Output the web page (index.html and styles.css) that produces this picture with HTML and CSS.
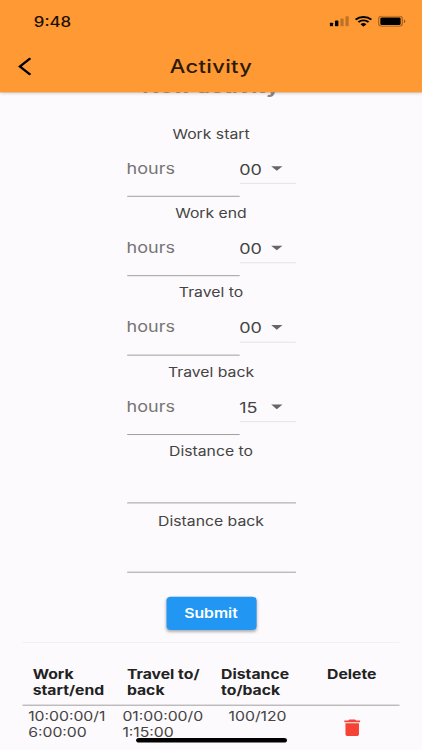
FILE: index.html
```html
<!DOCTYPE html>
<html>

	<head>
		<meta charset="utf-8" />
		<meta name="viewport" content="width=device-width, initial-scale=1">
		<title>Activity</title>
		<link rel="stylesheet" href="styles.css">
	</head>

	<body>
		<div class="screen">
			<header class="header">
				<div class="status">
					<span class="time">9:48</span>
					<div class="status-icons">
						<svg width="17" height="12" viewBox="0 0 17 12">
							<rect x="0" y="7.5" width="3" height="4" rx=".7" />
							<rect x="4.7" y="5.3" width="3" height="6.2" rx=".7" />
							<rect x="9.4" y="3" width="3" height="8.5" rx=".7" opacity=".25" />
							<rect x="14" y="0.5" width="3" height="11" rx=".7" opacity=".25" />
						</svg>
						<svg width="16" height="12" viewBox="0 0 16 12">
							<path d="M1 4.3a10 10 0 0 1 14 0M3.5 6.9a6.4 6.4 0 0 1 9 0" fill="none" stroke="#000" stroke-width="2" />
							<path d="M8 12L5.4 9.3a3.7 3.7 0 0 1 5.2 0z" />
						</svg>
						<svg width="25" height="12" viewBox="0 0 25 12">
							<rect x=".5" y=".5" width="21" height="11" rx="2.8" fill="none" stroke="#000" opacity=".4" />
							<rect x="2" y="2" width="18" height="8" rx="1.4" />
							<path d="M23 4v4c1.6-.6 1.6-3.4 0-4z" opacity=".45" />
						</svg>
					</div>
				</div>
				<div class="nav">
					<svg class="back" width="12" height="20" viewBox="0 0 12 20">
						<path d="M11 1L1.7 10L11 19" fill="none" stroke="#000" stroke-width="2.3" />
					</svg>
					<h1 class="title">Activity</h1>
				</div>
			</header>

			<main class="content">
				<h2 class="form-tit">New activity</h2>
				<form class="form">
					<div class="item">
						<label>Work start</label>
						<div class="row">
							<div class="hours">hours</div>
							<div class="select">00<i class="arrow"></i></div>
						</div>
					</div>
					<div class="item">
						<label>Work end</label>
						<div class="row">
							<div class="hours">hours</div>
							<div class="select">00<i class="arrow"></i></div>
						</div>
					</div>
					<div class="item">
						<label>Travel to</label>
						<div class="row">
							<div class="hours">hours</div>
							<div class="select">00<i class="arrow"></i></div>
						</div>
					</div>
					<div class="item">
						<label>Travel back</label>
						<div class="row">
							<div class="hours">hours</div>
							<div class="select">15<i class="arrow"></i></div>
						</div>
					</div>
					<div class="item item-short">
						<label>Distance to</label>
						<div class="distance"></div>
					</div>
					<div class="item item-short">
						<label>Distance back</label>
						<div class="distance"></div>
					</div>
					<button class="submit" type="button">Submit</button>
				</form>

				<section class="table">
					<div class="table-head">
						<div>Work<br>start/end</div>
						<div>Travel to/<br>back</div>
						<div>Distance<br>to/back</div>
						<div class="center">Delete</div>
					</div>
					<div class="table-row">
						<div>10:00:00/1<br>6:00:00</div>
						<div>01:00:00/0<br>1:15:00</div>
						<div class="center">100/120</div>
						<div class="delete">
							<svg width="24" height="24" viewBox="0 0 24 24">
								<path d="M6 19c0 1.1.9 2 2 2h8c1.1 0 2-.9 2-2V7H6v12zM19 4h-3.5l-1-1h-5l-1 1H5v2h14V4z" fill="#f44336" />
							</svg>
						</div>
					</div>
				</section>
			</main>
			<div class="home-bar"></div>
		</div>
	</body>

</html>
```

FILE: styles.css
```css
* {
	padding: 0;
	margin: 0;
	box-sizing: border-box;
}

html {
	height: 100%;
	overflow: hidden;
}

body {
	width: 422px;
	height: 750px;
	overflow: clip;
	background: #fcfafc;
	font-family: Inter, "Liberation Sans", sans-serif;
	color: #444;
}

.screen {
	position: relative;
	width: 375px;
	height: 812px;
	overflow: clip;
	transform: scale(1.1253, .9236);
	transform-origin: 0 0;
}

.header {
	position: relative;
	z-index: 2;
	height: 100px;
	background: #ff9933;
	box-shadow: 0 1px 4px rgba(0, 0, 0, .35);
}

.status {
	display: flex;
	justify-content: space-between;
	height: 44px;
	padding: 14px 14.5px 0 30px;
}

.time {
	padding-top: 1px;
	font-size: 15px;
	font-weight: 500;
	line-height: 18px;
	color: #1c0f02;
}

.status-icons {
	display: flex;
	gap: 5px;
	padding-top: 3px;
}

.nav {
	display: grid;
	grid-template-columns: 56px 1fr 56px;
	align-items: center;
	height: 56px;
}

.back {
	margin-left: 16px;
}

.title {
	font-size: 19.5px;
	font-weight: 450;
	letter-spacing: .3px;
	text-align: center;
	color: #2b1a08;
}

.form-tit {
	height: 35px;
	margin-top: -18px;
	font-size: 20px;
	font-weight: 700;
	line-height: 24px;
	text-align: center;
	color: #88868a;
}

.form {
	display: flex;
	flex-direction: column;
	align-items: center;
	padding-top: 18.5px;
}

.item {
	width: 150px;
	height: 86px;
}

.item-short {
	height: 75px;
}

.item label {
	display: block;
	height: 17px;
	font-size: 14px;
	line-height: 17px;
	text-align: center;
	white-space: nowrap;
}

.row {
	display: flex;
}

.hours {
	width: 100px;
	height: 60px;
	padding-top: 19.5px;
	font-size: 16px;
	line-height: 20px;
	color: #757475;
	border-bottom: 1px solid #999;
}

.select {
	display: flex;
	justify-content: space-between;
	align-items: center;
	width: 50px;
	height: 46px;
	padding: 15px 12px 0 0;
	font-size: 16px;
	border-bottom: 1px solid #e4e2e4;
}

.arrow {
	border: 5px solid transparent;
	border-top-color: #666;
	border-bottom: 0;
}

.distance {
	height: 48.5px;
	border-bottom: 1px solid #999;
}

.submit {
	width: 80px;
	height: 36px;
	margin-top: 16px;
	padding-bottom: 1px;
	border: 0;
	border-radius: 4px;
	background: #2196f3;
	box-shadow: 0 2px 3px rgba(0, 0, 0, .3);
	color: #fff;
	font-family: inherit;
	font-size: 14px;
	font-weight: 600;
}

.table {
	margin: 13.5px 20px 0;
	border-top: 1px solid #f0eef0;
}

.table-head,
.table-row {
	display: grid;
	grid-template-columns: repeat(4, 83.75px);
	font-size: 14px;
	line-height: 17px;
}

.table-head {
	height: 68px;
	padding-top: 25px;
	font-weight: 700;
	color: #222;
	border-bottom: 1px solid #999;
}

.table-head div {
	padding-left: 9px;
	white-space: nowrap;
}

.table-row {
	padding-top: 3px;
}

.table-row div {
	padding-left: 5px;
	white-space: nowrap;
}

.table-head .center,
.table-row .center,
.table-row .delete {
	padding: 0 1px 0 0;
	text-align: center;
}

.table-row .delete {
	padding-top: 9px;
}

.home-bar {
	position: absolute;
	z-index: 3;
	left: 120.5px;
	bottom: 8px;
	width: 134px;
	height: 5px;
	border-radius: 3px;
	background: #000;
}
```
